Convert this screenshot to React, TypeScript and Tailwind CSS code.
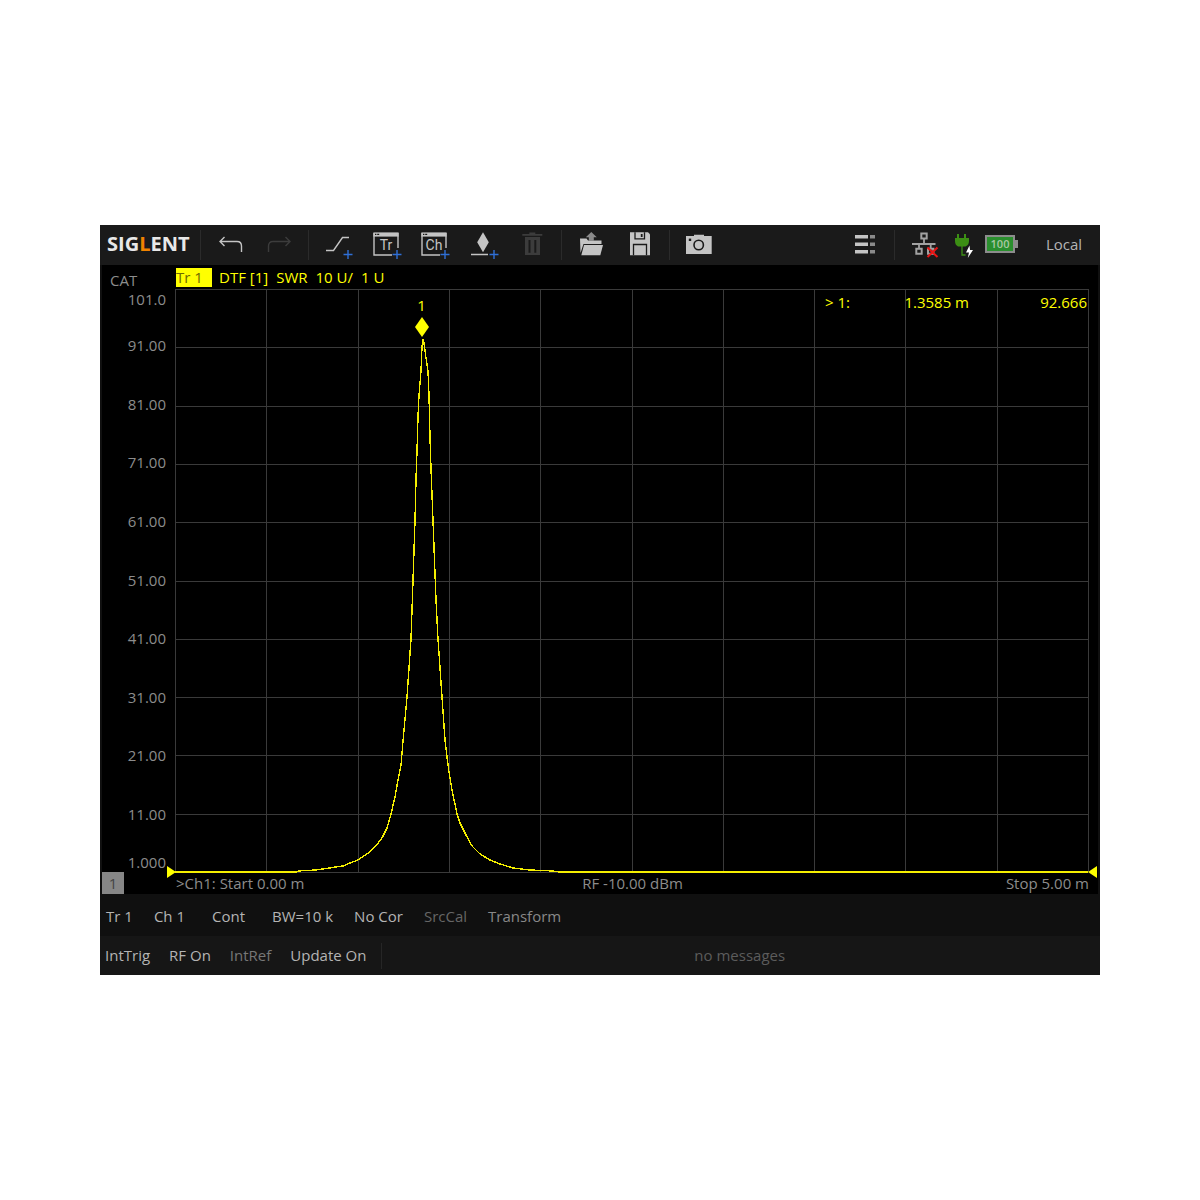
import React from "react";

interface ToolButtonProps {
  label: string;
  disabled?: boolean;
  children: React.ReactNode;
}

const ToolButton: React.FC<ToolButtonProps> = ({
  label,
  disabled,
  children,
}) => (
  <button
    type="button"
    aria-label={label}
    title={label}
    disabled={disabled}
    className={`h-10 w-12 shrink-0 ${
      disabled ? "text-[#3c3c3c]" : "text-[#c4c4c4]"
    }`}
  >
    <svg viewBox="0 0 48 40" className="h-10 w-12" fill="none">
      {children}
    </svg>
  </button>
);

const Divider = () => <div className="h-[30px] w-px shrink-0 bg-[#2b2b2b]" />;

const Plus = ({ x }: { x: number }) => (
  <path
    d={`M${x - 4.5} 29.5h9M${x} 25v9`}
    stroke="#2f6fd6"
    strokeWidth="1.4"
  />
);

// Window outline shared by the "add trace" and "add channel" buttons
const WindowIcon = ({ text }: { text: string }) => (
  <>
    <path d="M11 8v22h18M35 8v15" stroke="currentColor" strokeWidth="1.4" />
    <path d="M10.4 7.4h25.2v4.2H10.4z" fill="currentColor" />
    <path d="M12 9.3h1.4M14.2 9.3h2" stroke="#1a1a1a" strokeWidth="1.2" />
    <text
      x="23"
      y="25"
      textAnchor="middle"
      fontSize="14"
      fill="currentColor"
      fontFamily="Roboto, 'Liberation Sans', sans-serif"
    >
      {text}
    </text>
    <Plus x={34} />
  </>
);

const Toolbar = () => (
  <header className="flex h-10 items-center bg-[#1a1a1a]">
    <h1 className="w-[100px] shrink-0 pb-[2px] pl-[7px] text-[20px] leading-5 font-bold text-[#e8e8e8]">
      SIG<span className="text-[#f08300]">L</span>ENT
    </h1>
    <Divider />
    <div className="flex pr-[5px] pl-[6px]">
      <ToolButton label="Undo">
        <path
          d="M17.500 12L13 16.500l4.500 4.500M13 16.500h17q4.500 0 4.500 4.500v6"
          stroke="currentColor"
          strokeWidth="1.4"
        />
      </ToolButton>
      <ToolButton label="Redo" disabled>
        <path
          d="M30.500 12l4.500 4.500-4.500 4.500M35 16.500h-17q-4.500 0-4.500 4.500v6"
          stroke="currentColor"
          strokeWidth="1.4"
        />
      </ToolButton>
    </div>
    <Divider />
    <div className="flex px-[6px]">
      <ToolButton label="Add limit line">
        <path
          d="M11 25.500h7.500l9-13H34"
          stroke="currentColor"
          strokeWidth="1.4"
        />
        <Plus x={33} />
      </ToolButton>
      <ToolButton label="Add trace">
        <WindowIcon text="Tr" />
      </ToolButton>
      <ToolButton label="Add channel">
        <WindowIcon text="Ch" />
      </ToolButton>
      <ToolButton label="Add marker">
        <path d="M24 7.300l5.800 10L24 27.300l-5.800-10z" fill="currentColor" />
        <path d="M12 29.500h17" stroke="currentColor" strokeWidth="1.5" />
        <Plus x={35} />
      </ToolButton>
      <ToolButton label="Delete" disabled>
        <path
          d="M15.300 9h7V7.500h6V9h7v1.700h-20zM18 12h15v18H18zM21.500 15v12.700h2V15zM27.300 15v12.700h2V15z"
          fill="currentColor"
          fillRule="evenodd"
        />
      </ToolButton>
    </div>
    <Divider />
    <div className="flex pr-[5px] pl-[6px]">
      <ToolButton label="Recall">
        <path d="M12 13.500h6.500l1.500 2h13.500v3.500H15.500L12.500 28z" fill="currentColor" />
        <path d="M16 20h19l-2.700 10.300h-19z" fill="currentColor" />
        <path d="M23.300 7l5.500 5.200h-3V16h-5v-3.800h-3z" fill="#8a8a8a" />
      </ToolButton>
      <ToolButton label="Save">
        <path d="M14 7.300h18l2 2v21H14z" fill="currentColor" />
        <path
          d="M19 7.300v6.500h9.500V7.300M17.500 30.300V19.500h13v10.800"
          stroke="#1a1a1a"
          strokeWidth="1.3"
        />
        <path d="M24.800 9h1.800v3h-1.800z" fill="#1a1a1a" />
      </ToolButton>
    </div>
    <Divider />
    <div className="flex px-[6px]">
      <ToolButton label="Screenshot">
        <path d="M10 11h8V9.700h10V11h7.700v18H10z" fill="currentColor" />
        <circle cx="22.700" cy="20" r="4.700" stroke="#1a1a1a" strokeWidth="1.6" />
        <path d="M12.800 13.600h2.400V16h-2.400z" fill="#1a1a1a" />
      </ToolButton>
    </div>
    <div className="ml-auto flex items-center">
      <ToolButton label="Menu">
        <path d="M14 10h13v3.500H14zM14 17.500h13V21H14zM14 25h13v3.500H14z" fill="currentColor" />
        <path d="M29 10h5v3.500h-5zM29 17.500h5V21h-5zM29 25h5v3.500h-5z" fill="#8a8a8a" />
      </ToolButton>
      <div className="pl-[5px]">
        <Divider />
      </div>
      <svg
        viewBox="0 0 84 40"
        className="ml-3 h-10 w-[84px]"
        fill="none"
        role="img"
        aria-label="Network disconnected, charging"
      >
        <g stroke="#a2a2a2" strokeWidth="2">
          <path d="M14.300 8.500h5.400v5h-5.400zM9.300 23.700h5.400v5H9.300zM21 23.700h5.400v5H21z" />
          <path d="M17 14v5M12 19v4M23.700 19v4M5 19h23.500" strokeWidth="1.800" />
        </g>
        <path d="M20.500 22.500l10 9.500M30.500 22.500l-10 9.500" stroke="#e81414" strokeWidth="2" />
        <path
          d="M50 9h2v4h5V9h2v4h3v3q0 4-3.500 5.500h-7.500Q48 20 48 16v-3h2z"
          fill="#3c8f14"
        />
        <path d="M55 21v9h3.500" stroke="#3c8f14" strokeWidth="1.300" />
        <path d="M62.500 20.500L59 27.500h3L60.800 33l5.200-8h-3z" fill="#fff" />
      </svg>
      <div className="-ml-[6px] flex items-center pb-[2px]">
        <div className="flex h-[18px] w-[30px] items-center justify-center border-2 border-[#8c8c8c] bg-[#2a8f2e] text-[11px] font-semibold text-[#a9c7a2]">
          100
        </div>
        <div className="h-2 w-[3px] bg-[#8c8c8c]" />
      </div>
      <button type="button" className="w-[82px] pr-px pb-[2px] pl-[11px] text-[#b4b4b4]">
        Local
      </button>
    </div>
  </header>
);

const scaleLabels = [
  "91.00",
  "81.00",
  "71.00",
  "61.00",
  "51.00",
  "41.00",
  "31.00",
  "21.00",
  "11.00",
];

// Trace samples in the 913 x 583 plot space
const trace: [number, number][] = [
  [0, 583], [122, 583], [123, 582], [141, 581], [155, 579], [160, 578],
  [168, 577], [175, 574], [183, 571], [192, 565], [201, 557], [207, 549],
  [212, 539], [216, 525], [220, 508], [223, 491], [226, 476], [228, 452],
  [232, 408], [236, 350], [238, 292], [240, 232], [241, 190], [242, 162],
  [243, 128], [244, 106], [246, 82], [247, 58], [248, 50], [249, 54],
  [251, 69], [253, 82], [254, 106], [255, 148], [256, 180], [258, 232],
  [261, 311], [263, 350], [267, 408], [270, 451], [272, 468], [274, 483],
  [277, 501], [282, 525], [285, 534], [291, 546], [297, 557], [305, 565],
  [315, 571], [325, 575], [338, 579], [355, 581], [378, 582], [384, 583],
  [913, 583],
];

const gridSteps = [0, 1, 2, 3, 4, 5, 6, 7, 8, 9, 10];

const Chart = () => (
  <div className="relative min-w-0 flex-1">
    <svg
      viewBox="0 0 913 583"
      preserveAspectRatio="none"
      className="h-full w-full overflow-visible"
      fill="none"
      shapeRendering="crispEdges"
      role="img"
      aria-label="SWR against distance, peak 92.666 at 1.3585 m"
    >
      {gridSteps.map((i) => (
        <path
          key={i}
          d={`M${i * 91.3 + 0.5} 0V583M0 ${i * 58.3 + 0.5}H913`}
          stroke="#3a3a3a"
          vectorEffect="non-scaling-stroke"
        />
      ))}
      <polyline
        points={trace.map(([x, y]) => `${x},${y}`).join(" ")}
        stroke="#f4ee00"
        strokeWidth="1.4"
        vectorEffect="non-scaling-stroke"
      />
    </svg>
    <div className="absolute top-[6px] left-[27%] flex w-4 -translate-x-1/2 flex-col items-center gap-[2px] text-[#ffff00]">
      <span className="leading-5">1</span>
      <svg viewBox="0 0 14 20" className="h-5 w-[14px]">
        <path d="M7 0l7 10-7 10-7-10z" fill="currentColor" />
      </svg>
    </div>
    <div className="absolute top-[3px] right-px flex leading-5 text-[#ffff00]">
      <span className="w-[77px]">&gt; 1:</span>
      <span className="w-[67px] text-right">1.3585 m</span>
      <span className="w-[118px] text-right">92.666</span>
    </div>
    <svg viewBox="0 0 9 12" className="absolute -bottom-[6px] -left-2 h-3 w-[9px]">
      <path d="M0 0l9 6-9 6z" fill="#ffff00" />
    </svg>
    <svg viewBox="0 0 9 12" className="absolute -right-[9px] -bottom-[6px] h-3 w-[9px]">
      <path d="M9 0v12L0 6z" fill="#ffff00" />
    </svg>
  </div>
);

const Plot = () => (
  <main className="mx-[2px] bg-black text-[#8c8c8c]">
    <div className="flex h-6 items-center">
      <span className="w-[74px] shrink-0 pt-[6px] pl-2 leading-5">CAT</span>
      <div className="flex items-center text-[#ffff00]">
        <span className="h-[19px] w-9 bg-[#ffff00] leading-[19px] text-[#6e6a00]">
          Tr 1
        </span>
        <span className="pl-[7px]">DTF [1]</span>
        <span className="pl-2">SWR</span>
        <span className="pl-2">10 U/</span>
        <span className="pl-2">1 U</span>
      </div>
    </div>
    <div className="flex h-[583px] pr-[10px]">
      <div className="flex w-[73px] shrink-0 flex-col pr-[9px] text-right">
        <div className="h-5 leading-5">101.0</div>
        <div className="mt-[7px] mb-[9px] flex flex-1 flex-col">
          {scaleLabels.map((label) => (
            <div key={label} className="flex flex-1 items-center justify-end">
              {label}
            </div>
          ))}
        </div>
        <div className="h-5 leading-5">1.000</div>
      </div>
      <Chart />
    </div>
    <div className="flex h-[22px] items-center pr-[9px]">
      <button type="button" className="h-[22px] w-[22px] bg-[#868686] text-[#444444]">
        1
      </button>
      <div className="grid flex-1 grid-cols-3 pb-px pl-[52px]">
        <span>&gt;Ch1: Start 0.00 m</span>
        <span className="text-center">RF -10.00 dBm</span>
        <span className="text-right">Stop 5.00 m</span>
      </div>
    </div>
  </main>
);

const StatusBars = () => (
  <footer className="whitespace-nowrap text-[#b4b4b4]">
    <div className="flex h-[42px] items-center gap-[21px] bg-[#101010] pt-px pl-[6px]">
      <button type="button">Tr 1</button>
      <button type="button">Ch 1</button>
      <button type="button" className="px-[6px]">
        Cont
      </button>
      <button type="button">BW=10 k</button>
      <button type="button">No Cor</button>
      <button type="button" className="text-[#666666]">
        SrcCal
      </button>
      <button type="button" className="text-[#888888]">
        Transform
      </button>
    </div>
    <div className="flex h-[39px] items-center bg-[#161616]">
      <div className="flex gap-[19px] pr-[15px] pb-[2px] pl-[5px]">
        <button type="button">IntTrig</button>
        <button type="button">RF On</button>
        <button type="button" className="text-[#777777]">
          IntRef
        </button>
        <button type="button">Update On</button>
      </div>
      <div className="h-[26px] w-px bg-[#262626]" />
      <p className="flex-1 pr-[3px] pb-[2px] text-center text-[#5c5c5c]">no messages</p>
    </div>
  </footer>
);

const App: React.FC = () => (
  <div className="flex min-h-screen items-center bg-white px-[100px]">
    <div className="w-full bg-[#101010] font-['Open_Sans','Noto_Sans',sans-serif] text-[15px] leading-5">
      <Toolbar />
      <Plot />
      <StatusBars />
    </div>
  </div>
);

export default App;
